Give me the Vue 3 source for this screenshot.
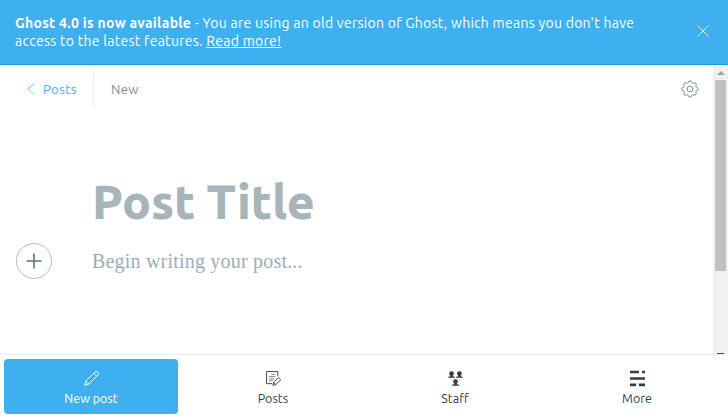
<script setup>
const tabs = [
  { id: 'new', label: 'New post', active: true },
  { id: 'posts', label: 'Posts' },
  { id: 'staff', label: 'Staff' },
  { id: 'more', label: 'More' },
]
</script>

<template>
  <div class="app">
    <aside class="alert">
      <p class="message">
        <b>Ghost 4.0 is now available</b><span class="first"> - You are using an old version of Ghost, which means you don't have</span><br>
        <span class="second">access to the latest features. <a>Read more!</a></span>
      </p>
      <svg class="close" width="12" height="12" viewBox="0 0 12 12"><path d="M.4.4l11.2 11.2M11.6.4L.4 11.6" /></svg>
    </aside>

    <div class="viewport">
      <main class="editor">
        <header class="toolbar">
          <a class="back">
            <svg width="8" height="12" viewBox="0 0 8 12"><path d="M7.6.4L.7 6l6.900 5.600" /></svg>
            <span>Posts</span>
          </a>
          <span class="status">New</span>
          <svg class="gear" width="18" height="18" viewBox="0 0 18 18">
            <path d="M7.300 2.300Q7.500.9 9 .9t1.700 1.400q.5 1.500 1.900.8 1.300-.7 2.200.2t.2 2.100q-.8 1.400.7 1.900 1.500.3 1.500 1.700t-1.500 1.700q-1.500.5-.7 1.900.7 1.200-.2 2.100t-2.200.2q-1.400-.7-1.900.8-.2 1.400-1.700 1.400t-1.700-1.400q-.5-1.500-1.900-.8-1.300.7-2.200-.2t-.2-2.100q.8-1.400-.7-1.900Q.8 10.400.8 9t1.500-1.700q1.500-.5.700-1.900-.7-1.200.2-2.100t2.200-.2q1.400.7 1.900-.8z" />
            <circle cx="9" cy="9" r="2.900" />
          </svg>
        </header>
        <h1 class="title">Post Title</h1>
        <div class="body-row">
          <span class="plus"><svg width="16" height="16" viewBox="0 0 16 16"><path d="M8 .5v15M.5 8h15" /></svg></span>
          <p class="body-text">Begin writing your post...</p>
        </div>
      </main>
      <div class="scrollbar">
        <span class="arrow"></span>
        <span class="thumb"></span>
        <span class="end"></span>
      </div>
    </div>

    <nav class="nav">
      <a v-for="tab in tabs" :key="tab.id" class="tab" :class="[tab.id, { active: tab.active }]">
        <svg v-if="tab.id === 'new'" class="icon line" viewBox="0 0 16 16">
          <path d="M.7 15.3l1.2-4.5L11.7 1q1-1 2.2-.2l1.3 1.3q.8 1-.2 2L5.2 14.1zM1.9 10.8l3.3 3.3M10.4 2.3l3.3 3.3" />
        </svg>
        <svg v-else-if="tab.id === 'posts'" class="icon line" viewBox="0 0 16 16">
          <path d="M6.5 13.5H.6V.6h12v4.9" />
          <path class="soft" d="M5.5 3.5h4.5M3 6h7M3 8.500h6M3 10.500h4.500" />
          <path d="M7.3 15.3l.9-3.1 4.6-4.6q.7-.6 1.4 0l.9.9q.6.7 0 1.4l-4.6 4.6zM8.2 12.2l2.2 2.2" />
        </svg>
        <svg v-else-if="tab.id === 'staff'" class="icon solid" viewBox="0 0 16 16">
          <g id="person"><path d="M3.8.3C5.3.3 6.300 1.200 6.300 2.500c0 1-.4 1.700-1 2.300v.7l1.700.5q.6.3.6 1.200H0q0-.9.6-1.200l1.700-.5v-.7c-.6-.6-1-1.300-1-2.300C1.300 1.200 2.300.3 3.800.3z" /></g>
          <use href="#person" x="8.400" />
          <use href="#person" x="4.200" y="8.500" />
          <path class="link" d="M2.300 8.300l2.300 2M13.700 8.300l-2.300 2" />
        </svg>
        <svg v-else class="icon bars" viewBox="0 0 16 16">
          <path d="M0 1h9.500M12.800 1H16M0 8h16M0 14.800h6.500M9.500 14.800H16" />
        </svg>
        <span class="label">{{ tab.label }}</span>
      </a>
    </nav>
  </div>
</template>

<style>
body { margin: 0; overflow: hidden; }
</style>

<style scoped>
* { box-sizing: border-box; }
.app {
  display: flex;
  flex-direction: column;
  width: 728px;
  height: 418px;
  overflow: hidden;
  background: #fff;
  font-family: Ubuntu, "Noto Sans", sans-serif;
}
svg { display: block; flex: none; fill: none; }
.alert {
  display: flex;
  align-items: center;
  justify-content: space-between;
  flex: none;
  height: 65px;
  padding: 0 19px 2px 15px;
  color: #fff;
  background: #3eb0ef;
  border-bottom: 1px solid #159eea;
}
.message { margin: 2px 0 0; font-size: 14px; line-height: 18px; letter-spacing: .27px; white-space: nowrap; }
.message b { font-weight: 700; letter-spacing: .3px; }
.message a { text-decoration: underline; }
.close { stroke: #fff; stroke-width: .8; }
.viewport { display: flex; flex: none; height: 289px; }
.editor { flex: 1; }
.toolbar { display: flex; align-items: center; height: 36px; margin-top: 6px; padding: 0 14px 0 27px; font-size: 13px; letter-spacing: .45px; }
.back { display: flex; align-items: center; gap: 8px; width: 67px; height: 36px; color: #3eb0ef; border-right: 1px solid #e5eff5; }
.back svg { stroke: #5bbcf0; stroke-width: .9; }
.status { flex: 1; padding-left: 17px; color: #788e98; letter-spacing: .35px; }
.gear { width: 18px; height: 18px; stroke: #738a94; stroke-width: 1; }
.title { margin: 64px 0 0 92px; font-size: 48px; font-weight: 800; line-height: 60px; letter-spacing: -.2px; color: #a6b4bc; white-space: nowrap; }
.body-row { display: flex; align-items: center; gap: 40px; margin: 12px 0 0 16px; }
.plus { display: flex; align-items: center; justify-content: center; width: 36px; height: 36px; border: 1px solid #afbec5; border-radius: 50%; }
.plus svg { stroke: #5f727c; stroke-width: 1.600; }
.body-text { margin: 0; font: 20px/30px "Liberation Serif", serif; letter-spacing: .2px; color: #9baeb8; }
.scrollbar { display: flex; flex-direction: column; align-items: center; flex: none; width: 15px; background: #f0f0f0; }
.arrow { margin-top: 6px; border: 4px solid transparent; border-top: 0; border-bottom: 4px solid #a0a0a0; }
.thumb { width: 11px; height: 191px; margin-top: 5px; background: #c0c0c0; }
.end { width: 7px; height: 1px; margin-top: auto; background: #505050; }
.nav { display: flex; flex: 1; gap: 8px; padding: 4px; background: #fff; border-top: 1px solid #e5eff5; }
.tab { display: flex; flex: 1; flex-direction: column; align-items: center; height: 55px; padding-top: 12px; color: #343f44; border-radius: 4px; }
.tab.active { color: #fff; background: #3eb0ef; }
.icon { width: 15px; height: 15px; overflow: visible; }
.line { stroke: currentColor; stroke-width: 1; }
.soft { opacity: .65; }
.solid { fill: currentColor; }
.link { stroke: #8b969b; stroke-width: .7; }
.bars { stroke: currentColor; stroke-width: 2.700; }
.label { margin-top: 3px; font-size: 12.500px; line-height: 18px; letter-spacing: 0; }
</style>
